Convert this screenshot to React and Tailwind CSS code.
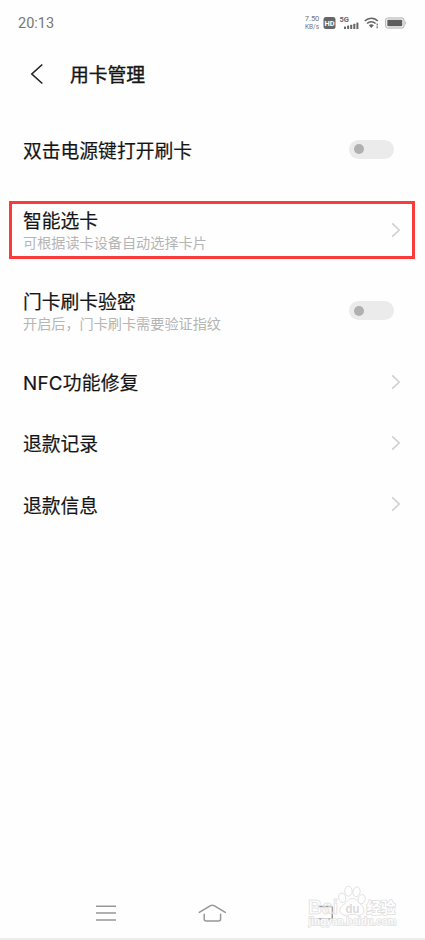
import React, { useState } from 'react';

const items = [
  { title: '双击电源键打开刷卡', type: 'switch', box: 'mt-[17px] h-[60px] mx-[9px] px-[14px]' },
  { title: '智能选卡', desc: '可根据读卡设备自动选择卡片', type: 'link', box: 'mt-[22px] h-[58px] ml-[9px] mr-[10px] pl-[11px] pr-[10px] border-3 border-[#fb3a3a]' },
  { title: '门卡刷卡验密', desc: '开启后，门卡刷卡需要验证指纹', type: 'switch', box: 'mt-[22px] h-[59px] mx-[9px] px-[14px]' },
  { title: 'NFC功能修复', type: 'link', box: 'mt-[11px] h-[61px] mx-[9px] px-[14px] tracking-[0.25px]' },
  { title: '退款记录', type: 'link', box: 'h-[61px] mx-[9px] px-[14px]' },
  { title: '退款信息', type: 'link', box: 'h-[62px] mx-[9px] px-[14px]' },
];

const StatusBar = () => (
  <div className="h-[46px] shrink-0 flex items-center justify-between pl-[18px] pr-[18px] text-[#777]">
    <span className="pt-[2px] font-['Roboto',sans-serif] text-[14.5px] leading-none">20:13</span>
    <div className="flex items-center">
      <div className="w-[16px] text-center font-['Roboto',sans-serif] text-[#777]">
        <div className="text-[7.5px] leading-[8px]">7.50</div>
        <div className="text-[6.5px] leading-[8px]">KB/s</div>
      </div>
      <svg className="ml-[3px]" width="13" height="12" viewBox="0 0 13 12">
        <rect x="0.5" y="0" width="12" height="12" rx="2.5" fill="#666" />
        <text x="6.5" y="8.8" textAnchor="middle" fontSize="7.5" fontWeight="700" fontFamily="Roboto, sans-serif" fill="#fff">HD</text>
      </svg>
      <svg className="ml-[3px]" width="20" height="14" viewBox="0 0 20 14">
        <text x="0.5" y="6.3" fontSize="7.5" fontWeight="700" fontFamily="Roboto, sans-serif" fill="#666">5G</text>
        <g fill="#666">
          <rect x="5" y="10.5" width="2" height="2.5" rx="0.5" />
          <rect x="8.1" y="9.5" width="2" height="3.5" rx="0.5" />
          <rect x="11.2" y="8.7" width="2" height="4.3" rx="0.5" />
          <rect x="14.3" y="7.7" width="2" height="5.3" rx="0.5" />
          <rect x="17.4" y="6.5" width="2" height="6.5" rx="0.5" />
        </g>
      </svg>
      <svg className="ml-[5px]" width="16" height="12" viewBox="0 0 16 12" fill="none" stroke="#666" strokeWidth="1.5">
        <path d="M0.8 4.1C4.5 0.2 10.2 0.2 13.8 4.1" />
        <path d="M3 6.5C5.4 4 9.2 4 11.6 6.5" />
        <path d="M4.8 8.2C6.3 6.8 8.3 6.8 9.8 8.2L7.3 11Z" fill="#666" stroke="none" />
        <path d="M13.2 6.5V8.5M13.2 9.2V11.2" strokeWidth="1.2" />
      </svg>
      <svg className="ml-[5px]" width="22" height="12" viewBox="0 0 22 12">
        <rect x="0.7" y="1" width="18.3" height="10" rx="2" fill="none" stroke="#aaa" />
        <rect x="2.3" y="2.7" width="15" height="6.6" rx="0.8" fill="#5e5e5e" />
        <path d="M20 4V8C21.2 7.6 21.2 4.4 20 4Z" fill="#bbb" />
      </svg>
    </div>
  </div>
);

const Toggle = () => {
  const [on, setOn] = useState(false);

  return (
    <button
      className={`w-[45px] h-[19px] mr-[8px] px-[4.5px] rounded-full bg-[#ebebeb] flex items-center ${on ? 'justify-end' : 'justify-start'}`}
      onClick={() => setOn(!on)}
    >
      <span className="w-[10px] h-[10px] rounded-full bg-[#b0b0b0]" />
    </button>
  );
};

const Chevron = () => (
  <svg className="mr-[1px]" width="10" height="16" viewBox="0 0 10 16" fill="none" stroke="#d0d0d0" strokeWidth="1.6">
    <path d="M1.2 1.3L8.2 8L1.2 14.7" />
  </svg>
);

const NavBar = () => (
  <div className="h-[52px] shrink-0 flex items-center pt-[2px] pl-[95px]">
    <svg width="22" height="18" viewBox="0 0 22 18" stroke="#979797" strokeWidth="1.5">
      <path d="M1 2.3H21M1 9.1H21M1 15.9H21" />
    </svg>
    <svg className="ml-[81px]" width="28" height="20" viewBox="0 0 28 20" fill="none" stroke="#979797" strokeWidth="1.5" strokeLinecap="round" strokeLinejoin="round">
      <path d="M1.3 9.4L12.5 2.6Q14.3 1.7 16.1 2.6L27.3 9.4" />
      <path d="M6.2 11.2V16Q6.2 18 8.2 18H20.6Q22.6 18 22.6 16V11.2" />
    </svg>
    <svg className="ml-[90px]" width="18" height="16" viewBox="0 0 18 16" fill="none" stroke="#979797" strokeWidth="1.5">
      <path d="M2 1.5H15Q16.3 1.5 16.3 3V12.5Q16.3 14 15 14H1" />
    </svg>
  </div>
);

// paw logo with outlined lettering, sits over the nav bar
const Watermark = () => (
  <svg className="absolute left-[304px] top-[884px]" width="98" height="46" viewBox="0 0 98 46" fill="#fff" stroke="#dedede" strokeWidth="0.9">
    <g fontFamily="'Liberation Sans', 'Noto Sans CJK SC', sans-serif" fontWeight="700">
      <text x="4" y="30" fontSize="20" fillOpacity="0.4" strokeOpacity="0.8" strokeWidth="1.1" textLength="30" lengthAdjust="spacingAndGlyphs">Bai</text>
      <ellipse cx="38.2" cy="13.8" rx="3.5" ry="4.8" transform="rotate(-15 38.2 13.8)" />
      <ellipse cx="44.4" cy="7.2" rx="3.7" ry="5" />
      <ellipse cx="52.5" cy="7.8" rx="3.6" ry="4.9" transform="rotate(10 52.5 7.8)" />
      <ellipse cx="57.7" cy="15.2" rx="3.5" ry="4.7" transform="rotate(15 57.7 15.2)" />
      <path d="M48.3 14.5C44 14.5 43.5 18 39.5 20.5C34 24.5 35 31 41 31.2C45 31.3 46 30.2 49 30.2C52 30.2 53 31.5 56 31.2C61 30.7 61 24.5 57 20.7C53.5 17.8 53 14.5 48.3 14.5Z" />
      <text x="41.5" y="28.5" fontSize="12" fill="#dadada" stroke="none" textLength="14" lengthAdjust="spacingAndGlyphs">du</text>
      <text x="62.5" y="29" fontSize="15" strokeWidth="1.6" textLength="29" lengthAdjust="spacingAndGlyphs" paintOrder="stroke">经验</text>
      <text x="4.5" y="41" fontSize="10" strokeWidth="1.3" fillOpacity="0.9" textLength="88" lengthAdjust="spacingAndGlyphs" paintOrder="stroke">jingyan.baidu.com</text>
    </g>
  </svg>
);

const App = () => {
  return (
    <div className="relative w-[425px] h-[940px] overflow-hidden bg-[#fefefe] flex flex-col font-['Inter','Noto_Sans_CJK_SC',sans-serif] text-[#151515]">
      <StatusBar />

      <div className="h-[56px] shrink-0 flex items-center pl-[30px]">
        <svg width="14" height="22" viewBox="0 0 14 22" fill="none" stroke="#222" strokeWidth="1.6">
          <path d="M12.3 1.5L1.8 11L12.3 20.5" />
        </svg>
        <h1 className="ml-[26px] pt-[4px] text-[18.8px] leading-none [-webkit-text-stroke:0.4px_#151515]">用卡管理</h1>
      </div>

      <div className="flex-1">
        {items.map((item) => (
          <div key={item.title} className={`flex items-center justify-between ${item.box}`}>
            <div className="pt-[5px]">
              <div className="text-[18.8px] leading-[22px] [-webkit-text-stroke:0.2px_#151515]">{item.title}</div>
              {item.desc && <div className="-mt-px mb-px text-[14.15px] leading-[21px] text-[#b5b5b5]">{item.desc}</div>}
            </div>
            {item.type === 'switch' ? <Toggle /> : <Chevron />}
          </div>
        ))}
      </div>

      <NavBar />
      <div className="h-[2px] shrink-0 bg-[#eeeeee]" />
      <Watermark />
    </div>
  );
};

export default App;
